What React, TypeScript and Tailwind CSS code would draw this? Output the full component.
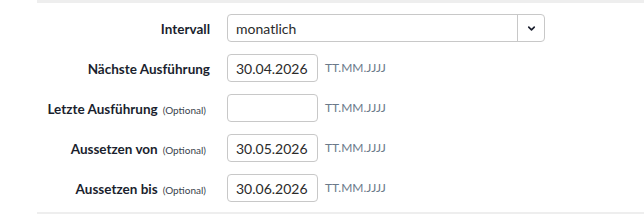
import { ChevronDown } from "lucide-react";

type Row = { label: string; optional?: boolean; value: string };

const rows: Row[] = [
  { label: "Nächste Ausführung", value: "30.04.2026" },
  { label: "Letzte Ausführung", optional: true, value: "" },
  { label: "Aussetzen von", optional: true, value: "30.05.2026" },
  { label: "Aussetzen bis", optional: true, value: "30.06.2026" },
];

const Label = ({ label, optional }: { label: string; optional?: boolean }) => (
  <div className="w-[173px] shrink-0 text-right whitespace-nowrap">
    <span className="text-[13.5px] font-bold text-[#1b1f2e]">{label}</span>
    {optional && <span className="ml-[5px] pr-[4px] text-[10px] text-[#3a3f4c]">(Optional)</span>}
  </div>
);

const App = () => {
  return (
    <div className="h-[222px] w-[644px] overflow-hidden bg-white font-['Lato',sans-serif]">
      <div className="ml-[37px] border-t-[3px] border-b-2 border-[#eeeeee] pt-[11px] pb-[10px]">
        <div className="flex flex-col gap-[12px]">
          <div className="flex items-center gap-[17px]">
            <Label label="Intervall" />
            <div className="flex h-[28px] w-[318px] items-stretch rounded-[4px] border border-[#c8c8c8]">
              <div className="flex flex-1 items-center pl-[8px] text-[14px] text-[#2b2b2b]">monatlich</div>
              <div className="flex w-[27px] items-center justify-center border-l border-[#c8c8c8]">
                <ChevronDown size={11} strokeWidth={3.5} className="text-[#1b1f2e]" />
              </div>
            </div>
          </div>
          {rows.map((r) => (
            <div key={r.label} className="flex items-center gap-[17px]">
              <Label label={r.label} optional={r.optional} />
              <div className="flex h-[28px] w-[91px] items-center rounded-[4px] border border-[#c8c8c8] pl-[8px] text-[14px] text-[#2b2b2b]">
                {r.value}
              </div>
              <span className="-ml-[10px] text-[12px] text-[#6b7a8a]">TT.MM.JJJJ</span>
            </div>
          ))}
        </div>
      </div>
    </div>
  );
};

export default App;
